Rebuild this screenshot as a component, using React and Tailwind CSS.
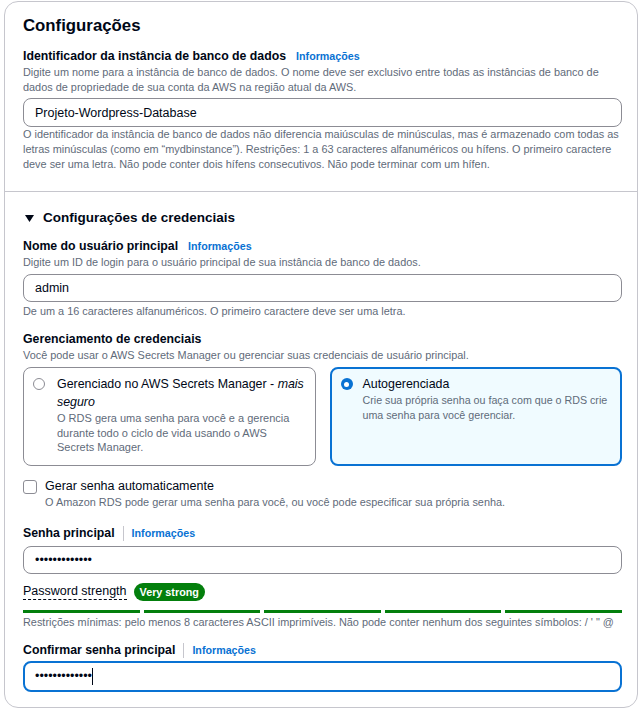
import React from 'react';

const font = { fontFamily: '"Liberation Sans", Arial, sans-serif' };

const Info = () => (
  <span className="text-[10.7px] font-bold text-[#0972d3] leading-[17px]">Informações</span>
);

const Label = ({ children, divider = false, className = '' }) => (
  <div className={`flex items-center text-[12.3px] font-bold leading-[17px] text-[#000716] ${className}`}>
    <span>{children}</span>
    {divider ? (
      <span className="mx-[8px] h-[15px] w-px bg-[#c6c6cd]" />
    ) : (
      <span className="w-[10px]" />
    )}
    <Info />
  </div>
);

const Desc = ({ children, className = '' }) => (
  <p className={`text-[10.9px] leading-[15px] text-[#5f6b7a] ${className}`}>{children}</p>
);

const TextInput = ({ value, type = 'text', className = '' }) => (
  <input
    type={type}
    value={value}
    readOnly
    className={`block w-full h-[28px] rounded-[8px] border border-[#8c8c94] bg-white px-[11px] text-[12.5px] text-[#000716] outline-none ${className}`}
    style={font}
  />
);

const Radio = ({ checked }) =>
  checked ? (
    <span className="mt-[3px] flex h-[12px] w-[12px] shrink-0 items-center justify-center rounded-full bg-[#0972d3]">
      <span className="h-[5px] w-[5px] rounded-full bg-white" />
    </span>
  ) : (
    <span className="mt-[3px] h-[12px] w-[12px] shrink-0 rounded-full border-[1.5px] border-[#8c8c94] bg-white" />
  );

const Caret = () => (
  <svg width="9" height="7" viewBox="0 0 9 7" className="mr-[9px]">
    <path d="M0 0 H9 L4.5 7 Z" fill="#000716" />
  </svg>
);

export default function App() {
  return (
    <div className="min-h-screen bg-white px-[4px] pt-[1px]" style={font}>
      <div className="rounded-[14px] border border-[#c6c6cd] bg-white">
        <section className="pl-[18px] pr-[15px] pt-[12px] pb-[19px] border-b border-[#c6c6cd]">
          <h2 className="text-[16.8px] font-bold leading-[24px] text-[#000716]">Configurações</h2>

          <Label className="mt-[10px]">Identificador da instância de banco de dados</Label>
          <Desc>
            Digite um nome para a instância de banco de dados. O nome deve ser exclusivo entre todas as instâncias de banco de dados de propriedade de sua conta da AWS na região atual da AWS.
          </Desc>
          <TextInput value="Projeto-Wordpress-Database" className="mt-[3px] h-[29px]" />
          <Desc>
            O identificador da instância de banco de dados não diferencia maiúsculas de minúsculas, mas é armazenado com todas as letras minúsculas (como em “mydbinstance”). Restrições: 1 a 63 caracteres alfanuméricos ou hífens. O primeiro caractere deve ser uma letra. Não pode conter dois hífens consecutivos. Não pode terminar com um hífen.
          </Desc>
        </section>

        <section className="pl-[18px] pr-[15px] pt-[16px] pb-[15px]">
          <div className="flex items-center text-[13.5px] font-bold leading-[20px] text-[#000716]">
            <span className="ml-[2px]"><Caret /></span>
            Configurações de credenciais
          </div>

          <Label className="mt-[10px]">Nome do usuário principal</Label>
          <Desc>Digite um ID de login para o usuário principal de sua instância de banco de dados.</Desc>
          <TextInput value="admin" className="mt-[4px]" />
          <Desc className="mt-[2px]">De um a 16 caracteres alfanuméricos. O primeiro caractere deve ser uma letra.</Desc>

          <div className="mt-[12px] text-[12.3px] font-bold leading-[17px] text-[#000716]">Gerenciamento de credenciais</div>
          <Desc>Você pode usar o AWS Secrets Manager ou gerenciar suas credenciais de usuário principal.</Desc>

          <div className="mt-[4px] grid grid-cols-2 gap-[14px]">
            <div className="flex gap-[12px] rounded-[8px] border border-[#8c8c94] pl-[9px] pr-[4px] pt-[7px] pb-[10px]">
              <Radio checked={false} />
              <div>
                <div className="text-[12.4px] leading-[18px] text-[#000716]">
                  Gerenciado no AWS Secrets Manager - <em>mais seguro</em>
                </div>
                <p className="pr-[8px] text-[11px] leading-[14.5px] text-[#5f6b7a]">
                  O RDS gera uma senha para você e a gerencia durante todo o ciclo de vida usando o AWS Secrets Manager.
                </p>
              </div>
            </div>
            <div className="flex gap-[10px] rounded-[8px] border-2 border-[#0972d3] bg-[#f0fbff] pl-[9px] pr-[4px] pt-[6px] pb-[10px]">
              <Radio checked />
              <div>
                <div className="text-[12.4px] leading-[18px] text-[#000716]">Autogerenciada</div>
                <p className="text-[10.7px] leading-[14.5px] text-[#5f6b7a]">
                  Crie sua própria senha ou faça com que o RDS crie uma senha para você gerenciar.
                </p>
              </div>
            </div>
          </div>

          <div className="mt-[11px] flex gap-[8px]">
            <span className="mt-[3px] h-[14px] w-[14px] shrink-0 rounded-[3px] border-[1.5px] border-[#8c8c94] bg-white" />
            <div>
              <div className="text-[12.5px] leading-[18px] text-[#000716]">Gerar senha automaticamente</div>
              <Desc>O Amazon RDS pode gerar uma senha para você, ou você pode especificar sua própria senha.</Desc>
            </div>
          </div>

          <Label divider className="mt-[15px]">Senha principal</Label>
          <TextInput type="password" value="Wp#2024Secure" className="mt-[4px]" />

          <div className="mt-[9px] flex items-center gap-[7px] h-[18px]">
            <span className="border-b border-dashed border-[#000716] text-[12.5px] leading-[16px] text-[#000716]">Password strength</span>
            <span className="rounded-full bg-[#037f0c] px-[6px] text-[10.8px] font-bold leading-[18px] text-white">Very strong</span>
          </div>

          <div className="mt-[9px] grid grid-cols-5 gap-[4px]">
            {[0, 1, 2, 3, 4].map(i => (
              <div key={i} className="h-[3px] bg-[#037f0c]" />
            ))}
          </div>
          <Desc className="mt-[2px]">
            Restrições mínimas: pelo menos 8 caracteres ASCII imprimíveis. Não pode conter nenhum dos seguintes símbolos: / ' " @
          </Desc>

          <Label divider className="mt-[12px]">Confirmar senha principal</Label>
          <div className="mt-[2px] flex h-[31px] items-center rounded-[8px] border-2 border-[#0972d3] bg-white px-[10px] text-[12.5px] text-[#000716]">
            <span>•••••••••••••</span>
            <span className="h-[17px] w-px bg-[#000716]" />
          </div>
        </section>
      </div>
    </div>
  );
}
